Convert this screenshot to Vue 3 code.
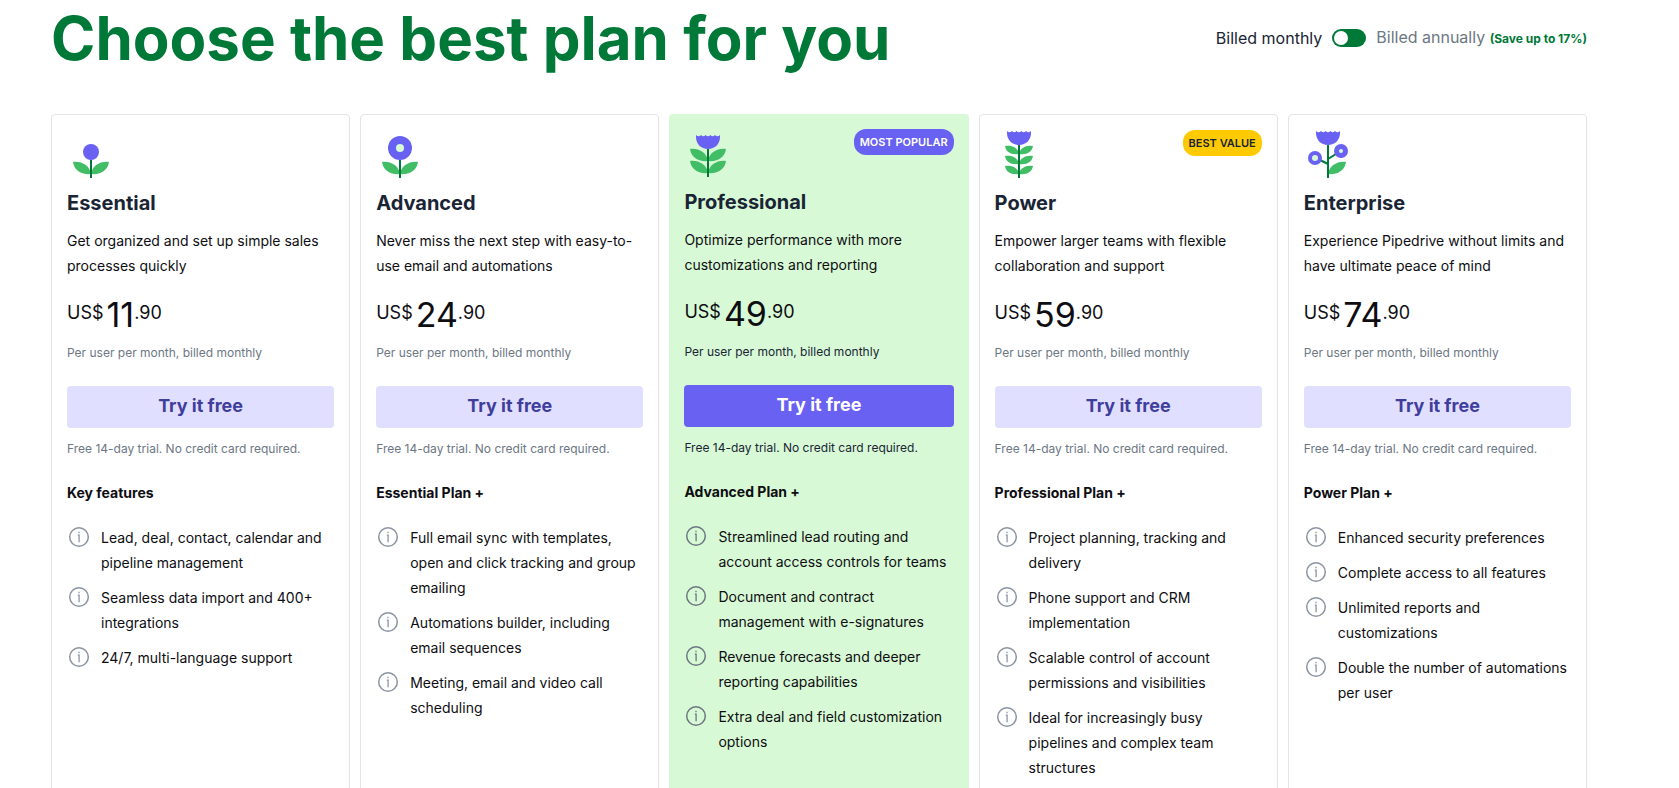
<script setup>
import { ref } from 'vue'

const annual = ref(false)

const plans = [
  {
    name: 'Essential', icon: 'essential', text: 'Get organized and set up simple sales processes quickly',
    price: '11', lead: 'Key features',
    features: ['Lead, deal, contact, calendar and pipeline management', 'Seamless data import and 400+ integrations', '24/7, multi-language support'],
  },
  {
    name: 'Advanced', icon: 'advanced', text: 'Never miss the next step with easy-to-use email and automations',
    price: '24', lead: 'Essential Plan +',
    features: ['Full email sync with templates, open and click tracking and group emailing', 'Automations builder, including email sequences', 'Meeting, email and video call scheduling'],
  },
  {
    name: 'Professional', icon: 'professional', text: 'Optimize performance with more customizations and reporting',
    price: '49', lead: 'Advanced Plan +', badge: 'MOST POPULAR', popular: true,
    features: ['Streamlined lead routing and account access controls for teams', 'Document and contract management with e-signatures', 'Revenue forecasts and deeper reporting capabilities', 'Extra deal and field customization options'],
  },
  {
    name: 'Power', icon: 'power', text: 'Empower larger teams with flexible collaboration and support',
    price: '59', lead: 'Professional Plan +', badge: 'BEST VALUE',
    features: ['Project planning, tracking and delivery', 'Phone support and CRM implementation', 'Scalable control of account permissions and visibilities', 'Ideal for increasingly busy pipelines and complex team structures'],
  },
  {
    name: 'Enterprise', icon: 'enterprise', text: 'Experience Pipedrive without limits and have ultimate peace of mind',
    price: '74', lead: 'Power Plan +',
    features: ['Enhanced security preferences', 'Complete access to all features', 'Unlimited reports and customizations', 'Double the number of automations per user'],
  },
]

const leafPair = 'M6 32C15 31 23 36 24 44C14 45 7 40 6 32ZM42 32C33 31 25 36 24 44C34 45 41 40 42 32Z'
const smallLeafPair = 'M10 16C17 15 23 18 24 24C16 25 11 22 10 16ZM38 16C31 15 25 18 24 24C32 25 37 22 38 16Z'
const tulip = 'M12 1Q14.5 3.4 17 1Q19.3 3.4 21.6 1Q24 3.4 26.4 1Q28.7 3.4 31 1Q33.5 3.4 36 1V3C36 10 31 15 24 15C17 15 12 10 12 3Z'
</script>

<template>
  <main class="page">
    <header class="top">
      <h1>Choose the best plan for you</h1>
      <div class="billing">
        <label for="billing">Billed monthly</label>
        <input id="billing" v-model="annual" type="checkbox" role="switch" class="switch">
        <label for="billing" class="annual">Billed annually <b>(Save up to 17%)</b></label>
      </div>
    </header>

    <section class="plans">
      <article v-for="plan in plans" :key="plan.name" class="card" :class="{ popular: plan.popular }">
        <div class="card-top">
          <svg class="flower" viewBox="0 0 48 48" aria-hidden="true">
            <template v-if="plan.icon === 'essential'">
              <path :d="leafPair" fill="#40bd65" />
              <path d="M24 30V48" stroke="#007838" stroke-width="2" />
              <circle cx="24" cy="22" r="8" fill="#6861f2" />
            </template>
            <template v-else-if="plan.icon === 'advanced'">
              <path :d="leafPair" fill="#40bd65" />
              <path d="M24 30V48" stroke="#007838" stroke-width="2" />
              <circle cx="24" cy="18" r="12" fill="#6861f2" />
              <circle cx="24" cy="18" r="4" fill="#d8f9d5" />
            </template>
            <template v-else-if="plan.icon === 'professional'">
              <path :d="leafPair" fill="#40bd65" />
              <path :d="leafPair" fill="#40bd65" transform="translate(0 -12)" />
              <path d="M24 20V48" stroke="#007838" stroke-width="2" />
              <path :d="tulip" fill="#6861f2" transform="translate(0 5)" />
            </template>
            <template v-else-if="plan.icon === 'power'">
              <path v-for="y in [0, 10, 20]" :key="y" :d="smallLeafPair" fill="#40bd65" :transform="`translate(0 ${y})`" />
              <path d="M24 15V48" stroke="#007838" stroke-width="2" />
              <path :d="tulip" fill="#6861f2" />
            </template>
            <template v-else>
              <path d="M42 32C33 31 25 36 24 44C34 45 41 40 42 32Z" fill="#40bd65" />
              <path d="M24 15V48M24 34L16 30M24 29L32 24" fill="none" stroke="#007838" stroke-width="2" />
              <path :d="tulip" fill="#6861f2" />
              <circle cx="37" cy="21" r="7" fill="#6861f2" />
              <circle cx="37" cy="21" r="2" fill="#d8f9d5" />
              <circle cx="11" cy="28" r="7" fill="#6861f2" />
              <circle cx="11" cy="28" r="3" fill="#d8f9d5" />
            </template>
          </svg>
          <span v-if="plan.badge" class="badge">{{ plan.badge }}</span>
        </div>
        <h2>{{ plan.name }}</h2>
        <p class="text">{{ plan.text }}</p>
        <p class="price"><span>US$</span><strong>{{ plan.price }}</strong><span>.90</span></p>
        <p class="note">Per user per month, billed monthly</p>
        <button type="button" class="cta">Try it free</button>
        <p class="note">Free 14-day trial. No credit card required.</p>
        <h3>{{ plan.lead }}</h3>
        <ul>
          <li v-for="f in plan.features" :key="f">
            <svg class="info" viewBox="0 0 24 24" aria-hidden="true">
              <circle cx="12" cy="12" r="9.3" fill="none" stroke="currentColor" stroke-width="1.5" />
              <path d="M10.8 10.2H12.1V17.2M12 6.7V8.2" fill="none" stroke="currentColor" stroke-width="1.3" />
            </svg>
            <span>{{ f }}</span>
          </li>
        </ul>
      </article>
    </section>
  </main>
</template>

<style>
body {
  margin: 0;
  background: #fff;
}
</style>

<style scoped>
.page {
  height: 100vh;
  overflow: hidden;
  box-sizing: border-box;
  padding: 0 92px 0 51px;
  font-family: Inter, "Liberation Sans", sans-serif;
  font-size: 14px;
  color: #0d0d12;
}
h1, h2, h3, p, ul {
  margin: 0;
  padding: 0;
}
.top {
  display: flex;
  justify-content: space-between;
  align-items: center;
  height: 76px;
  margin-bottom: 38px;
}
h1 {
  font-size: 60px;
  line-height: 76px;
  font-weight: 700;
  color: #007838;
}
.billing {
  display: flex;
  align-items: center;
  gap: 10px;
  font-size: 16px;
  line-height: 24px;
  color: #192435;
}
.annual {
  color: #6c7783;
}
.annual b {
  font-size: 12px;
  font-weight: 700;
  color: #007838;
}
.switch {
  appearance: none;
  flex: none;
  display: flex;
  align-items: center;
  width: 34px;
  height: 18px;
  margin: 0;
  padding: 2px;
  box-sizing: border-box;
  border-radius: 9px;
  background: #007838;
  cursor: pointer;
}
.switch::before {
  content: "";
  width: 14px;
  height: 14px;
  border-radius: 50%;
  background: #fff;
}
.switch:checked {
  justify-content: flex-end;
}
.plans {
  display: grid;
  grid-template-columns: repeat(5, 1fr);
  gap: 10px;
}
.card {
  padding: 15px 15px 40px;
  border: 1px solid #e3e4e8;
  border-radius: 4px;
}
.popular {
  border: 0;
  background: #d8f9d5;
}
.card-top {
  display: flex;
  justify-content: space-between;
  align-items: flex-start;
}
.flower {
  display: block;
  width: 48px;
  height: 48px;
}
.badge {
  padding: 0 6px;
  border-radius: 12px;
  font-size: 11px;
  line-height: 26px;
  font-weight: 600;
  background: #ffcb00;
  color: #192435;
}
.popular .badge {
  background: #6861f2;
  color: #fff;
}
h2 {
  margin: 10px 0;
  font-size: 20px;
  line-height: 30px;
  font-weight: 700;
  color: #192435;
}
.text {
  line-height: 25px;
}
.price {
  display: flex;
  align-items: flex-start;
  height: 36px;
  margin: 18px 0 11px;
  font-size: 18px;
  line-height: 34px;
}
.price strong {
  margin-left: 3px;
  font-size: 34px;
  line-height: 38px;
  font-weight: 400;
}
.note {
  font-size: 12px;
  line-height: 20px;
  color: #6c7783;
}
.popular .note {
  color: #192435;
}
.cta {
  display: block;
  width: 100%;
  height: 42px;
  margin: 23px 0 11px;
  padding: 0 0 2px;
  border: 0;
  border-radius: 4px;
  font: 700 18px/40px Inter, "Liberation Sans", sans-serif;
  background: #e1dfff;
  color: #403e9c;
  cursor: pointer;
}
.popular .cta {
  background: #6861f2;
  color: #fff;
}
h3 {
  margin: 21px 0 20px;
  font-size: 14px;
  line-height: 25px;
  font-weight: 700;
}
ul {
  display: grid;
  gap: 10px;
  list-style: none;
}
li {
  display: flex;
  align-items: flex-start;
  gap: 10px;
  line-height: 25px;
}
.info {
  flex: none;
  width: 24px;
  height: 24px;
  color: #8c95a3;
}
.popular .info {
  color: #6c7783;
}
</style>
